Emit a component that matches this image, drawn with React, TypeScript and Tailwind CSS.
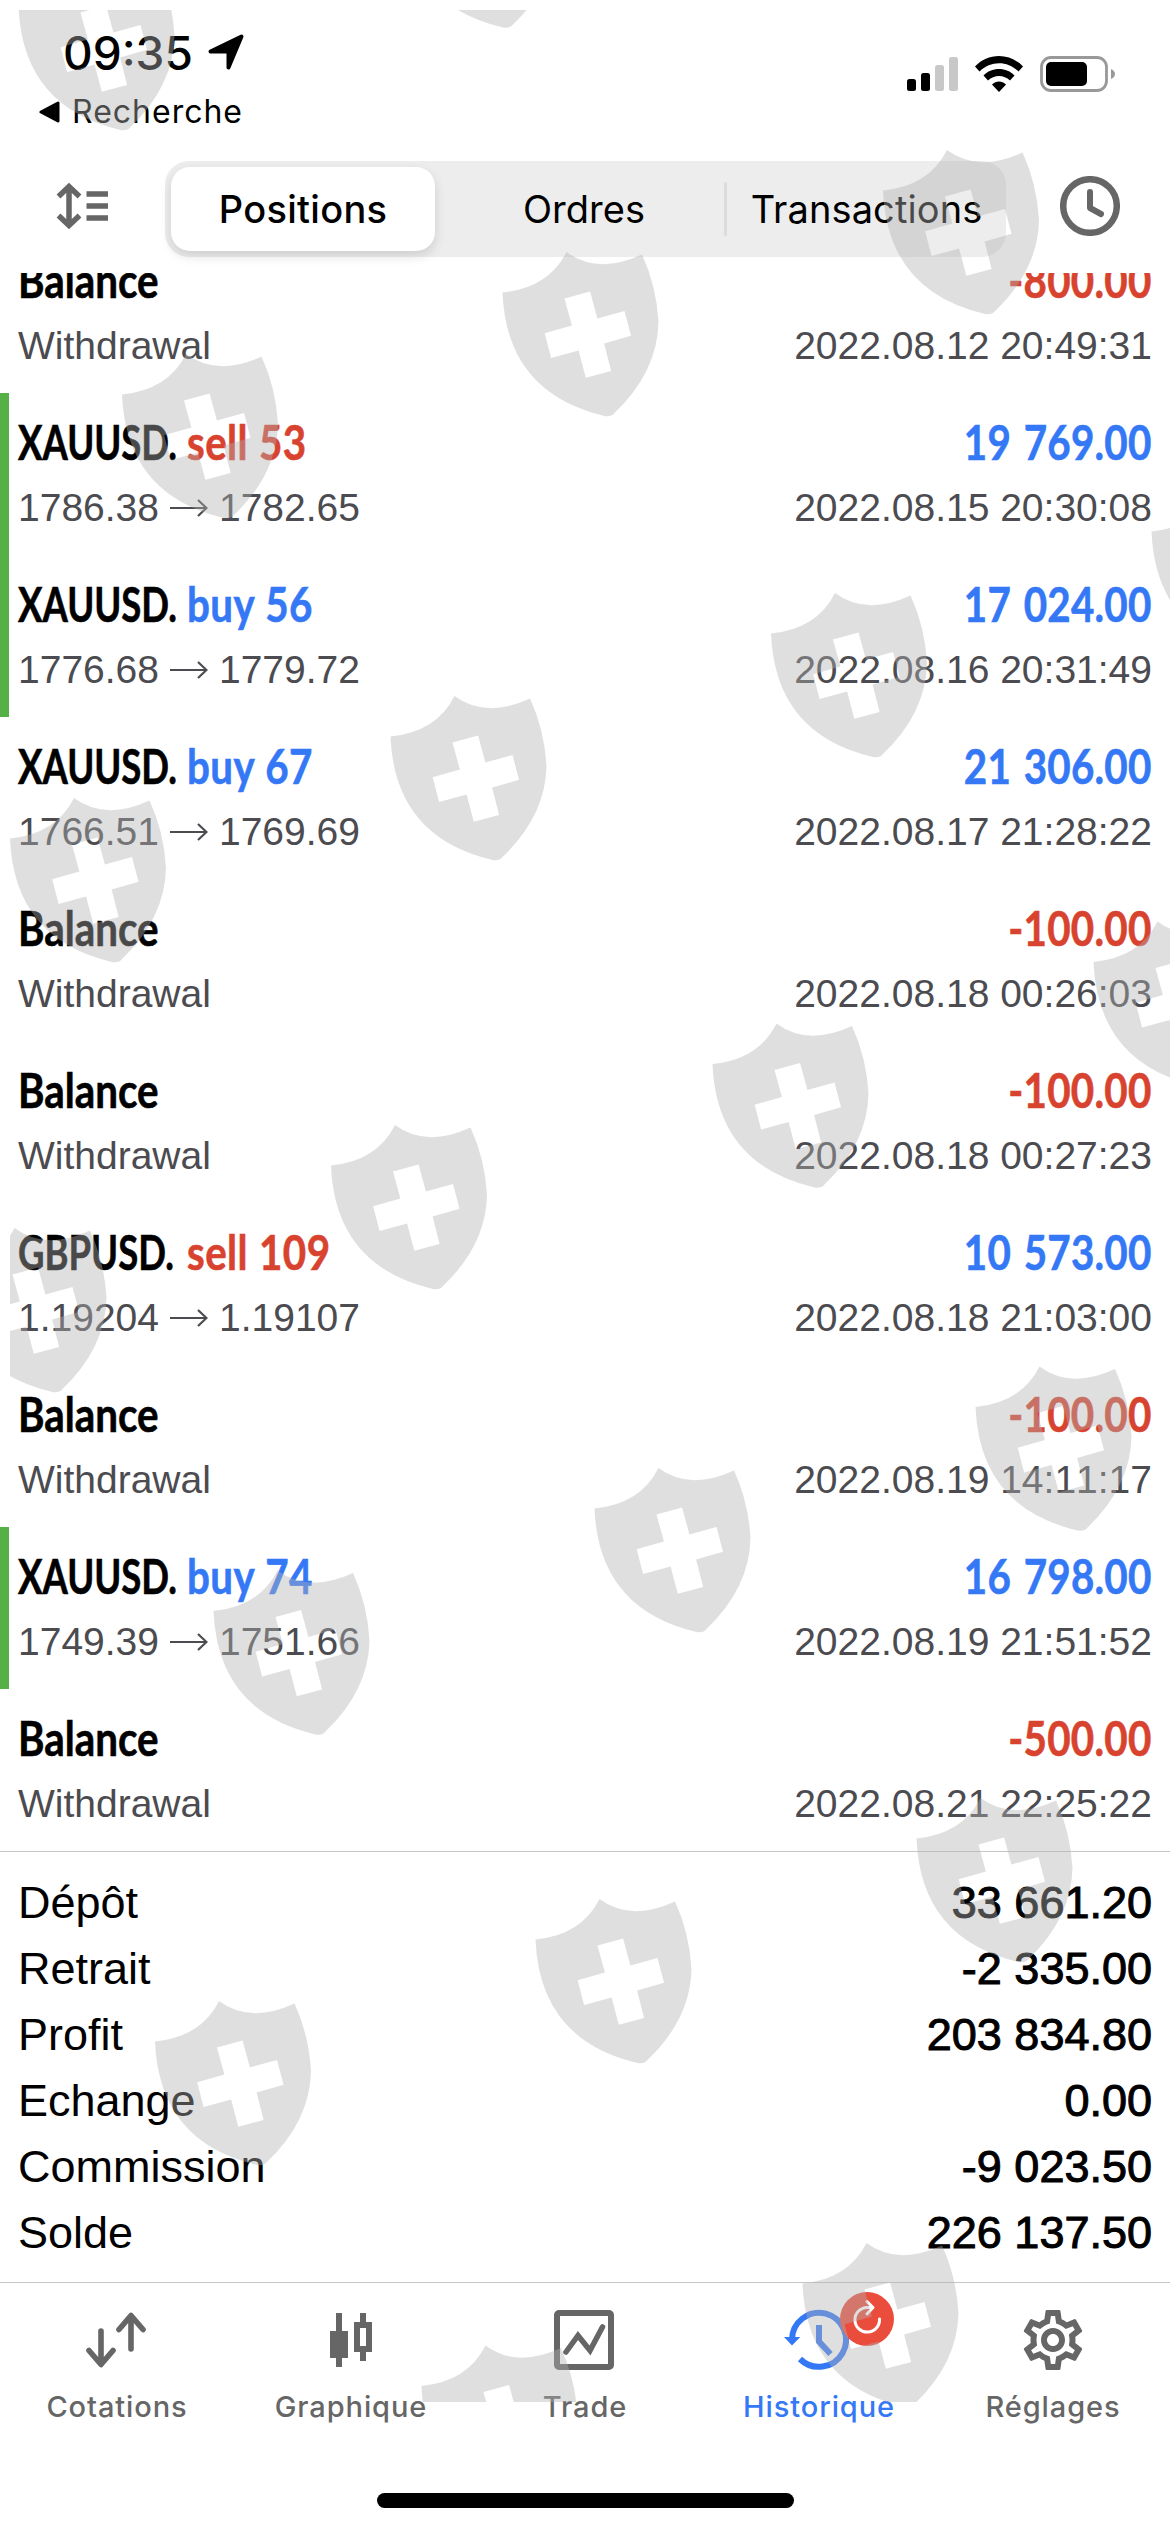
import React from 'react';
import { MdOutlineSettings } from 'react-icons/md';

type Deal = {
  id: number;
  symbol: string;
  side?: 'buy' | 'sell';
  volume?: string;
  from?: string;
  to?: string;
  amount: string;
  time: string;
  marked?: boolean;
};

const deals: Deal[] = [
  { id: 1, symbol: 'Balance', amount: '-800.00', time: '2022.08.12 20:49:31' },
  { id: 2, symbol: 'XAUUSD.', side: 'sell', volume: '53', from: '1786.38', to: '1782.65', amount: '19 769.00', time: '2022.08.15 20:30:08', marked: true },
  { id: 3, symbol: 'XAUUSD.', side: 'buy', volume: '56', from: '1776.68', to: '1779.72', amount: '17 024.00', time: '2022.08.16 20:31:49', marked: true },
  { id: 4, symbol: 'XAUUSD.', side: 'buy', volume: '67', from: '1766.51', to: '1769.69', amount: '21 306.00', time: '2022.08.17 21:28:22' },
  { id: 5, symbol: 'Balance', amount: '-100.00', time: '2022.08.18 00:26:03' },
  { id: 6, symbol: 'Balance', amount: '-100.00', time: '2022.08.18 00:27:23' },
  { id: 7, symbol: 'GBPUSD.', side: 'sell', volume: '109', from: '1.19204', to: '1.19107', amount: '10 573.00', time: '2022.08.18 21:03:00' },
  { id: 8, symbol: 'Balance', amount: '-100.00', time: '2022.08.19 14:11:17' },
  { id: 9, symbol: 'XAUUSD.', side: 'buy', volume: '74', from: '1749.39', to: '1751.66', amount: '16 798.00', time: '2022.08.19 21:51:52', marked: true },
  { id: 10, symbol: 'Balance', amount: '-500.00', time: '2022.08.21 22:25:22' },
];

const summary = [
  ['Dépôt', '33 661.20'],
  ['Retrait', '-2 335.00'],
  ['Profit', '203 834.80'],
  ['Echange', '0.00'],
  ['Commission', '-9 023.50'],
  ['Solde', '226 137.50'],
];

// Top-left corner of every shield
const shields = [
  [18.5, -34], [401, -136.5],
  [883, 150], [502.5, 252], [122, 354],
  [1151.5, 491], [771, 593], [390.5, 696], [10, 798],
  [1093.5, 921.5], [712.5, 1023.5], [331, 1125], [-49.5, 1228],
  [975.5, 1366.5], [594.5, 1468], [213.5, 1570.5],
  [916.5, 1798], [535.5, 1899], [155, 2001],
  [802.5, 2243], [421.5, 2345.5],
];

const Watermark = () => (
  <svg className="absolute inset-0 pointer-events-none" width="1170" height="2532" viewBox="0 0 1170 2532">
    <defs>
      <clipPath id="area">
        <rect x="10" y="10" width="1160" height="2392" />
      </clipPath>
      <path
        id="shield"
        fillRule="evenodd"
        d="M0 40.5Q46 36 64 0Q95 23 139.500 2.500Q154 34 156 70Q155 120 112 161Q109 165 102 164Q4 141 0 40.500ZM62 46.500L69.400 73.600L42.200 81.200L48.600 106L76.100 98.400L83.300 125.800L108.600 119L101.600 91.600L128.500 83.800L122 59L94.900 66.400L87.600 39.600Z"
      />
    </defs>
    <g clipPath="url(#area)" fill="#b2b2b2" fillOpacity="0.41">
      {shields.map(([x, y]) => (
        <use key={`${x}-${y}`} href="#shield" x={x} y={y} />
      ))}
    </g>
  </svg>
);

const StatusBar = () => (
  <div className="flex h-[161px] justify-between">
    <div className="pt-7 pl-[39px]">
      <div className="flex h-12 items-center pl-[24px]">
        <span className="w-[145px] pt-px text-[46px] leading-[48px] font-medium">09:35</span>
        <svg width="36" height="37" viewBox="0 0 36 37">
          <path d="M33.500 2.500L20.500 33.500V17.500H2.500Z" fill="#000" stroke="#000" strokeWidth="4" strokeLinejoin="round" />
        </svg>
      </div>
      <div className="mt-[18px] flex h-9 items-center">
        <svg width="21" height="22" viewBox="0 0 21 22">
          <path d="M19 2V20L2 11Z" fill="#000" stroke="#000" strokeWidth="3" strokeLinejoin="round" />
        </svg>
        <span className="ml-[12px] text-[32px] leading-[36px] tracking-[1px]">Recherche</span>
      </div>
    </div>
    <div className="flex h-[40px] items-center pr-[55px] mt-[54px]">
      <svg width="51" height="34" viewBox="0 0 51 34" className="mr-[17px]">
        <rect x="0" y="22" width="9" height="12" rx="2.500" />
        <rect x="14" y="16" width="9" height="18" rx="2.500" />
        <rect x="28" y="8" width="9" height="26" rx="2.500" fill="#c8c8c8" />
        <rect x="42" y="0" width="9" height="34" rx="2.500" fill="#c8c8c8" />
      </svg>
      <svg width="48" height="36" viewBox="0 0 48 36" className="mr-[17px]">
        <path d="M24 0C33 0 42 4 48 10.500L43.500 15.500C38 10 31 7.200 24 7.200S10 10 4.500 15.500L0 10.500C6 4 15 0 24 0Z" />
        <path d="M24 13C30 13 35.500 15.200 39.500 19.500L35 24.500C32 21.500 28 20 24 20S16 21.500 13 24.500L8.500 19.500C12.500 15.200 18 13 24 13Z" />
        <path d="M24 25.500C26.500 25.500 29 26.500 31 28.500L24 36L17 28.500C19 26.500 21.500 25.500 24 25.500Z" />
      </svg>
      <svg width="75" height="36" viewBox="0 0 75 36">
        <rect x="1.500" y="1.500" width="65" height="33" rx="9.500" fill="none" stroke="#999" strokeWidth="2.800" />
        <rect x="6" y="6" width="41" height="24" rx="5" />
        <path d="M71 13C73.500 14 75 16 75 18S73.500 22 71 23Z" fill="#999" />
      </svg>
    </div>
  </div>
);

const Toolbar = () => (
  <div className="flex h-[96px] items-center">
    <svg width="54" height="48" viewBox="0 0 54 48" className="ml-[56px] -translate-y-[3px]" fill="none" stroke="#666" strokeWidth="5.500">
      <path d="M13 5V43M2.500 14.500L13 4.500L23.500 14.500M2.500 33.500L13 43.500L23.500 33.500" />
      <path d="M30.500 12H52M30.500 24H52M30.500 36H52" />
    </svg>
    <div className="ml-[55px] flex h-[96px] w-[841px] rounded-[24px] bg-[#ededed] text-[38px]">
      <div className="mt-[6px] ml-[6px] flex h-[84px] w-[264px] items-center justify-center rounded-[19px] bg-white font-medium shadow-[0_5px_12px_rgba(0,0,0,0.13)]">
        <span className="pt-px tracking-[0.3px]">Positions</span>
      </div>
      <div className="flex w-[289px] items-center justify-center pl-[9px]">
        <span>Ordres</span>
      </div>
      <div className="h-[54px] w-[3px] self-center rounded bg-[#dcdcdc]" />
      <div className="flex flex-1 items-center justify-center">
        <span className="tracking-[0.1px]">Transactions</span>
      </div>
    </div>
    <svg width="60" height="60" viewBox="0 0 60 60" className="ml-[54px] -translate-y-[3px]" fill="none" stroke="#666">
      <circle cx="30" cy="30" r="26.800" strokeWidth="6.500" />
      <path d="M30 16V32L41 38" strokeWidth="6" strokeLinecap="round" strokeLinejoin="round" />
    </svg>
  </div>
);

const Arrow = () => (
  <svg width="38" height="18" viewBox="0 0 38 18" className="mx-[11px]" fill="none" stroke="#4b4b50" strokeWidth="2.200">
    <path d="M0 9H36M28 1L36.500 9L28 17" />
  </svg>
);

const DealRow = ({ symbol, side, volume, from, to, amount, time, marked }: Deal) => (
  <div className={`h-[162px] border-l-[9px] pt-[21px] pr-[18px] pl-[9px] ${marked ? 'border-[#55b146]' : 'border-transparent'}`}>
    <div className="flex h-14 justify-between font-['Lato',sans-serif] text-[48px] leading-[56px] font-bold whitespace-nowrap [-webkit-text-stroke:0.6px_currentColor]">
      {side ? (
        <div className="flex">
          <div className="w-[169px]">
            <span className="inline-block origin-left scale-x-[0.76]">{symbol}</span>
          </div>
          <span className={`origin-left scale-x-[0.84] tracking-[0.5px] [word-spacing:1px] ${side === 'buy' ? 'text-[#3478f6]' : 'text-[#d8432f]'}`}>
            {side} {volume}
          </span>
        </div>
      ) : (
        <span className="origin-left scale-x-[0.84]">{symbol}</span>
      )}
      <span className={`origin-right scale-x-[0.84] tracking-[0.3px] [word-spacing:3px] ${amount.startsWith('-') ? 'text-[#d8432f]' : 'text-[#3478f6]'}`}>{amount}</span>
    </div>
    <div className="mt-4 flex h-11 justify-between font-['Liberation_Sans',Arial,sans-serif] text-[39px] leading-[44px] text-[#4b4b50] [font-kerning:none]">
      {from ? (
        <div className="flex items-center">
          <span>{from}</span>
          <Arrow />
          <span>{to}</span>
        </div>
      ) : (
        <span>Withdrawal</span>
      )}
      <span>{time}</span>
    </div>
  </div>
);

const tabIcon = {
  width: 72,
  height: 72,
  viewBox: '0 0 72 72',
  fill: 'none',
  stroke: 'currentColor',
};

const tabs = [
  {
    label: 'Cotations',
    icon: (
      <svg {...tabIcon} strokeWidth="5.600" strokeLinecap="round" strokeLinejoin="round">
        <path d="M20 27V60M8 46.500L20 60.500L32 46.500" />
        <path d="M50 45V12M38 25.500L50 11.500L62 25.500" />
      </svg>
    ),
  },
  {
    label: 'Graphique',
    icon: (
      <svg {...tabIcon} strokeWidth="6">
        <path d="M24 9V63M48 9V21M48 45V57" />
        <rect x="18" y="30" width="12" height="21" fill="currentColor" />
        <rect x="42" y="21" width="12" height="24" />
      </svg>
    ),
  },
  {
    label: 'Trade',
    icon: (
      <svg {...tabIcon} strokeWidth="6">
        <rect x="8" y="9" width="54" height="54" rx="2" />
        <path d="M17 48L29 31.500L41 46.500L53.500 23" strokeWidth="5.500" strokeLinecap="round" />
      </svg>
    ),
  },
  {
    label: 'Historique',
    active: true,
    icon: (
      <svg {...tabIcon} strokeWidth="6">
        <path d="M9 36A27 27 0 1 1 17 55" />
        <path d="M1 33H17.300L9 41.500Z" fill="currentColor" stroke="none" />
        <path d="M36 21V37.500L47.500 50" />
      </svg>
    ),
  },
  { label: 'Réglages', icon: <MdOutlineSettings size={72} /> },
];

const TabBar = () => (
  <div className="flex border-t border-[#c6c6c8] pt-[21px]">
    {tabs.map(({ label, icon, active }) => (
      <div key={label} className={`flex w-[234px] flex-col items-center ${active ? 'text-[#3478f6]' : 'text-[#666]'}`}>
        <div className="relative">
          {icon}
          {active && (
            <div className="absolute -top-[12px] left-[57px] h-[54px] w-[54px] rounded-full bg-[#eb4d3d]">
              <svg width="54" height="54" viewBox="0 0 54 54" fill="none" stroke="#fff" strokeWidth="3">
                <path d="M39.500 27A12.300 12.300 0 1 1 27 15.500H32" strokeLinecap="round" />
                <path d="M27 9.500L33 15.500L27 22" strokeLinecap="round" strokeLinejoin="round" />
              </svg>
            </div>
          )}
        </div>
        <span className="mt-[14px] text-[29px] leading-[34px] font-medium tracking-[0.9px]">{label}</span>
      </div>
    ))}
  </div>
);

const App: React.FC = () => {
  return (
    <div className="relative flex h-[2532px] w-[1170px] flex-col overflow-hidden bg-white font-['Inter',sans-serif] text-black">
      <StatusBar />
      <Toolbar />

      {/* Deals, scrolled so the first one is cut by the toolbar */}
      <div className="mt-4 h-[1578px] overflow-hidden">
        <div className="-mt-[42px]">
          {deals.map((deal) => (
            <DealRow key={deal.id} {...deal} />
          ))}
        </div>
      </div>

      {/* Totals */}
      <div className="h-[431px] border-t border-[#c6c6c8] px-[18px] pt-[18px] font-['Liberation_Sans',Arial,sans-serif] text-[45px] leading-[66px]">
        {summary.map(([label, value]) => (
          <div key={label} className="flex justify-between">
            <span>{label}</span>
            <span className="[-webkit-text-stroke:1px_black]">{value}</span>
          </div>
        ))}
      </div>

      <TabBar />

      {/* Home indicator */}
      <div className="mt-auto mb-6 h-[15px] w-[417px] self-center rounded-full bg-black" />

      <Watermark />
    </div>
  );
};

export default App;
